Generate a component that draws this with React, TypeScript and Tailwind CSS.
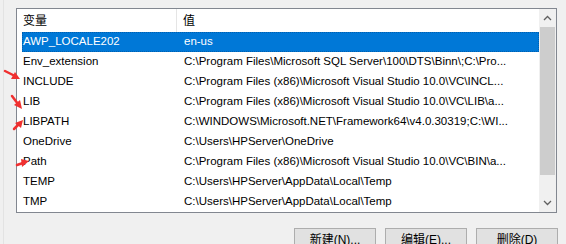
import React from 'react';

const rows = [
  { name: 'AWP_LOCALE202', value: 'en-us' },
  { name: 'Env_extension', value: 'C:\\Program Files\\Microsoft SQL Server\\100\\DTS\\Binn\\;C:\\Pro...' },
  { name: 'INCLUDE', value: 'C:\\Program Files (x86)\\Microsoft Visual Studio 10.0\\VC\\INCL...' },
  { name: 'LIB', value: 'C:\\Program Files (x86)\\Microsoft Visual Studio 10.0\\VC\\LIB\\a...' },
  { name: 'LIBPATH', value: 'C:\\WINDOWS\\Microsoft.NET\\Framework64\\v4.0.30319;C:\\WI...' },
  { name: 'OneDrive', value: 'C:\\Users\\HPServer\\OneDrive' },
  { name: 'Path', value: 'C:\\Program Files (x86)\\Microsoft Visual Studio 10.0\\VC\\BIN\\a...' },
  { name: 'TEMP', value: 'C:\\Users\\HPServer\\AppData\\Local\\Temp' },
  { name: 'TMP', value: 'C:\\Users\\HPServer\\AppData\\Local\\Temp' },
];

const font = "font-['Liberation_Sans','Noto_Sans_CJK_SC',sans-serif]";

function Arrows() {
  // red annotation arrows drawn over the list
  return (
    <svg className="absolute left-0 top-0 pointer-events-none" width="40" height="244">
      <g stroke="#f03030" strokeWidth="2.5" strokeLinecap="round" fill="#f03030">
        <line x1="5" y1="71" x2="15" y2="76" />
        <polygon points="20,79 11,79 15,72" stroke="none" />
        <line x1="12" y1="96" x2="18" y2="104" />
        <polygon points="22,109 14,105 20,100" stroke="none" />
        <line x1="14" y1="129" x2="18" y2="125" />
        <polygon points="23,120 15,123 21,128" stroke="none" />
        <line x1="17" y1="165" x2="23" y2="163" />
        <polygon points="29,161 21,159 22,167" stroke="none" />
      </g>
    </svg>
  );
}

export default function App() {
  return (
    <div className={`relative w-[566px] h-[244px] overflow-hidden bg-[#f0f0f0] ${font} text-[11.5px] text-black`}>
      <div className="ml-[3px] h-full border-l border-[#e3e3e3] pl-[12px] pt-[8px]">
        {/* list box */}
        <div className="flex w-[541px] h-[205px] border border-[#828790] bg-white">
          <div className="flex-1 flex flex-col">
            <div className="flex h-[23px] items-center">
              <div className="w-[160px] h-full pl-[6px] flex items-center border-r border-[#e5e5e5] text-[12px]">变量</div>
              <div className="pl-[6px] text-[12px]">值</div>
            </div>
            {rows.map((row, i) => (
              <div
                key={row.name}
                className={`flex h-[20px] items-center ml-[5px] whitespace-nowrap overflow-hidden ${
                  i === 0 ? 'bg-[#0078d7] text-white outline-1 outline-dotted outline-[#0060b0] -outline-offset-1' : ''
                }`}
              >
                <span className="w-[162px] pl-[1px]">{row.name}</span>
                <span className="flex-1 overflow-hidden">{row.value}</span>
              </div>
            ))}
          </div>
          {/* scrollbar */}
          <div className="w-[17px] flex flex-col bg-[#f0f0f0]">
            <div className="h-[18px] flex items-center justify-center">
              <svg width="9" height="6" viewBox="0 0 9 6"><path d="M1 5 L4.5 1.5 L8 5" stroke="#606060" strokeWidth="1.3" fill="none" /></svg>
            </div>
            <div className="mx-[1px] h-[148px] bg-[#cdcdcd]" />
            <div className="flex-1" />
            <div className="h-[18px] flex items-center justify-center">
              <svg width="9" height="6" viewBox="0 0 9 6"><path d="M1 1 L4.5 4.5 L8 1" stroke="#606060" strokeWidth="1.3" fill="none" /></svg>
            </div>
          </div>
        </div>
        {/* buttons */}
        <div className="flex justify-end gap-[9px] w-[542px] mt-[15px] text-[12px]">
          {['新建(N)...', '编辑(E)...', '删除(D)'].map((b) => (
            <button key={b} className="w-[82px] h-[23px] bg-[#e1e1e1] border border-[#adadad] flex items-center justify-center">
              {b}
            </button>
          ))}
        </div>
      </div>
      <Arrows />
    </div>
  );
}
